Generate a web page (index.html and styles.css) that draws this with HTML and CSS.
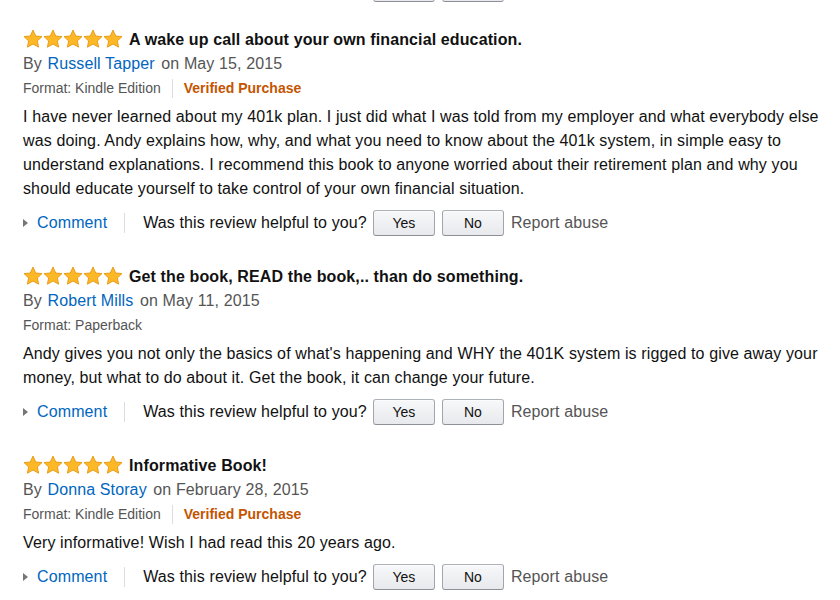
FILE: index.html
```html
<!doctype html>
<html lang="en">
  <head>
    <meta charset="utf-8">
    <title>Customer Reviews</title>
    <link rel="stylesheet" href="styles.css">
  </head>
  <body>
    <svg class="defs" width="0" height="0">
      <symbol id="star" viewBox="0 0 20 20">
        <polygon points="10,1 12.7,7.0 19.03,7.56 14.4,11.9 15.58,18.19 10,15 4.42,18.19 5.6,11.9 0.97,7.56 7.3,7.0" />
      </symbol>
    </svg>

    <div class="reviews">
      <!-- tail of the previous review, scrolled off the top -->
      <div class="actions actions-cut">
        <button class="vote vote-first"></button>
        <button class="vote"></button>
      </div>

      <div class="review">
        <div class="title-row">
          <svg class="stars" viewBox="0 0 100 20"><use href="#star" x="0" width="20" height="20"/><use href="#star" x="20" width="20" height="20"/><use href="#star" x="40" width="20" height="20"/><use href="#star" x="60" width="20" height="20"/><use href="#star" x="80" width="20" height="20"/></svg>
          <span class="title">A wake up call about your own financial education.</span>
        </div>
        <div class="byline">By <a class="author" href="#">Russell Tapper</a> on May 15, 2015</div>
        <div class="meta">
          <span>Format: Kindle Edition</span>
          <span class="divider"></span>
          <span class="verified">Verified Purchase</span>
        </div>
        <p class="text">I have never learned about my 401k plan. I just did what I was told from my employer and what everybody else was doing. Andy explains how, why, and what you need to know about the 401k system, in simple easy to understand explanations. I recommend this book to anyone worried about their retirement plan and why you should educate yourself to take control of your own financial situation.</p>
        <div class="actions">
          <span class="caret"></span>
          <a class="comment" href="#">Comment</a>
          <span class="divider"></span>
          <span class="helpful">Was this review helpful to you?</span>
          <button class="vote">Yes</button>
          <button class="vote">No</button>
          <a class="report" href="#">Report abuse</a>
        </div>
      </div>

      <div class="review">
        <div class="title-row">
          <svg class="stars" viewBox="0 0 100 20"><use href="#star" x="0" width="20" height="20"/><use href="#star" x="20" width="20" height="20"/><use href="#star" x="40" width="20" height="20"/><use href="#star" x="60" width="20" height="20"/><use href="#star" x="80" width="20" height="20"/></svg>
          <span class="title">Get the book, READ the book,.. than do something.</span>
        </div>
        <div class="byline">By <a class="author" href="#">Robert Mills</a> on May 11, 2015</div>
        <div class="meta">
          <span>Format: Paperback</span>
        </div>
        <p class="text">Andy gives you not only the basics of what's happening and WHY the 401K system is rigged to give away your money, but what to do about it. Get the book, it can change your future.</p>
        <div class="actions">
          <span class="caret"></span>
          <a class="comment" href="#">Comment</a>
          <span class="divider"></span>
          <span class="helpful">Was this review helpful to you?</span>
          <button class="vote">Yes</button>
          <button class="vote">No</button>
          <a class="report" href="#">Report abuse</a>
        </div>
      </div>

      <div class="review">
        <div class="title-row">
          <svg class="stars" viewBox="0 0 100 20"><use href="#star" x="0" width="20" height="20"/><use href="#star" x="20" width="20" height="20"/><use href="#star" x="40" width="20" height="20"/><use href="#star" x="60" width="20" height="20"/><use href="#star" x="80" width="20" height="20"/></svg>
          <span class="title">Informative Book!</span>
        </div>
        <div class="byline">By <a class="author" href="#">Donna Storay</a> on February 28, 2015</div>
        <div class="meta">
          <span>Format: Kindle Edition</span>
          <span class="divider"></span>
          <span class="verified">Verified Purchase</span>
        </div>
        <p class="text">Very informative! Wish I had read this 20 years ago.</p>
        <div class="actions">
          <span class="caret"></span>
          <a class="comment" href="#">Comment</a>
          <span class="divider"></span>
          <span class="helpful">Was this review helpful to you?</span>
          <button class="vote">Yes</button>
          <button class="vote">No</button>
          <a class="report" href="#">Report abuse</a>
        </div>
      </div>
    </div>
  </body>
</html>
```

FILE: styles.css
```css
body {
  margin: 0;
  background: #fff;
  color: #111;
  font-family: "Liberation Sans", Arial, sans-serif;
  font-size: 16px;
  letter-spacing: 0.12px;
  overflow: hidden;
}

a {
  text-decoration: none;
}

.defs {
  position: absolute;
}

.reviews {
  width: 800px;
  padding-left: 23px;
}

.review {
  padding-top: 29px;
}

.actions-cut + .review {
  padding-top: 26px;
}

.title-row {
  display: flex;
  align-items: center;
  height: 24px;
}

.stars {
  width: 100px;
  height: 20px;
  margin-right: 6px;
  margin-top: -2px;
  fill: #fdb827;
  stroke: #e5970f;
  stroke-width: 0.9px;
}

.title {
  font-weight: bold;
  font-size: 16px;
  line-height: 24px;
}

.byline {
  line-height: 24px;
  color: #555;
}

.author {
  color: #0066c0;
  margin-left: 1px;
  margin-right: 2px;
}

.meta {
  display: flex;
  align-items: center;
  font-size: 14px;
  line-height: 24px;
  letter-spacing: 0;
  color: #555;
}

.meta .divider {
  height: 19px;
  margin: 0 11px 0 11px;
}

.verified {
  color: #c45500;
  font-weight: bold;
}

.divider {
  display: inline-block;
  width: 1px;
  background: #ddd;
}

.text {
  margin: 5px 0 0;
  line-height: 24px;
}

.actions {
  display: flex;
  align-items: center;
  height: 26px;
  margin-top: 9px;
}

.actions-cut {
  margin-top: -24px;
}

.caret {
  width: 0;
  height: 0;
  border-top: 4px solid transparent;
  border-bottom: 4px solid transparent;
  border-left: 5px solid #767676;
  margin-right: 9px;
}

.comment {
  color: #0066c0;
}

.actions .divider {
  height: 20px;
  margin: 0 18px 0 17px;
}

.helpful {
  margin-right: 6px;
}

.vote {
  width: 62px;
  height: 26px;
  margin: 0 7px 0 0;
  padding: 0;
  font-family: "Liberation Sans", Arial, sans-serif;
  font-size: 14px;
  color: #111;
  background: linear-gradient(#f7f8fa, #e7e9ec);
  border: 1px solid #adb1b8;
  border-color: #adb1b8 #a2a6ac #8d9096;
  border-radius: 3px;
  box-shadow: inset 0 1px 0 rgba(255, 255, 255, 0.6);
}

.vote-first {
  margin-left: 350px;
}

.report {
  color: #555;
}
```
